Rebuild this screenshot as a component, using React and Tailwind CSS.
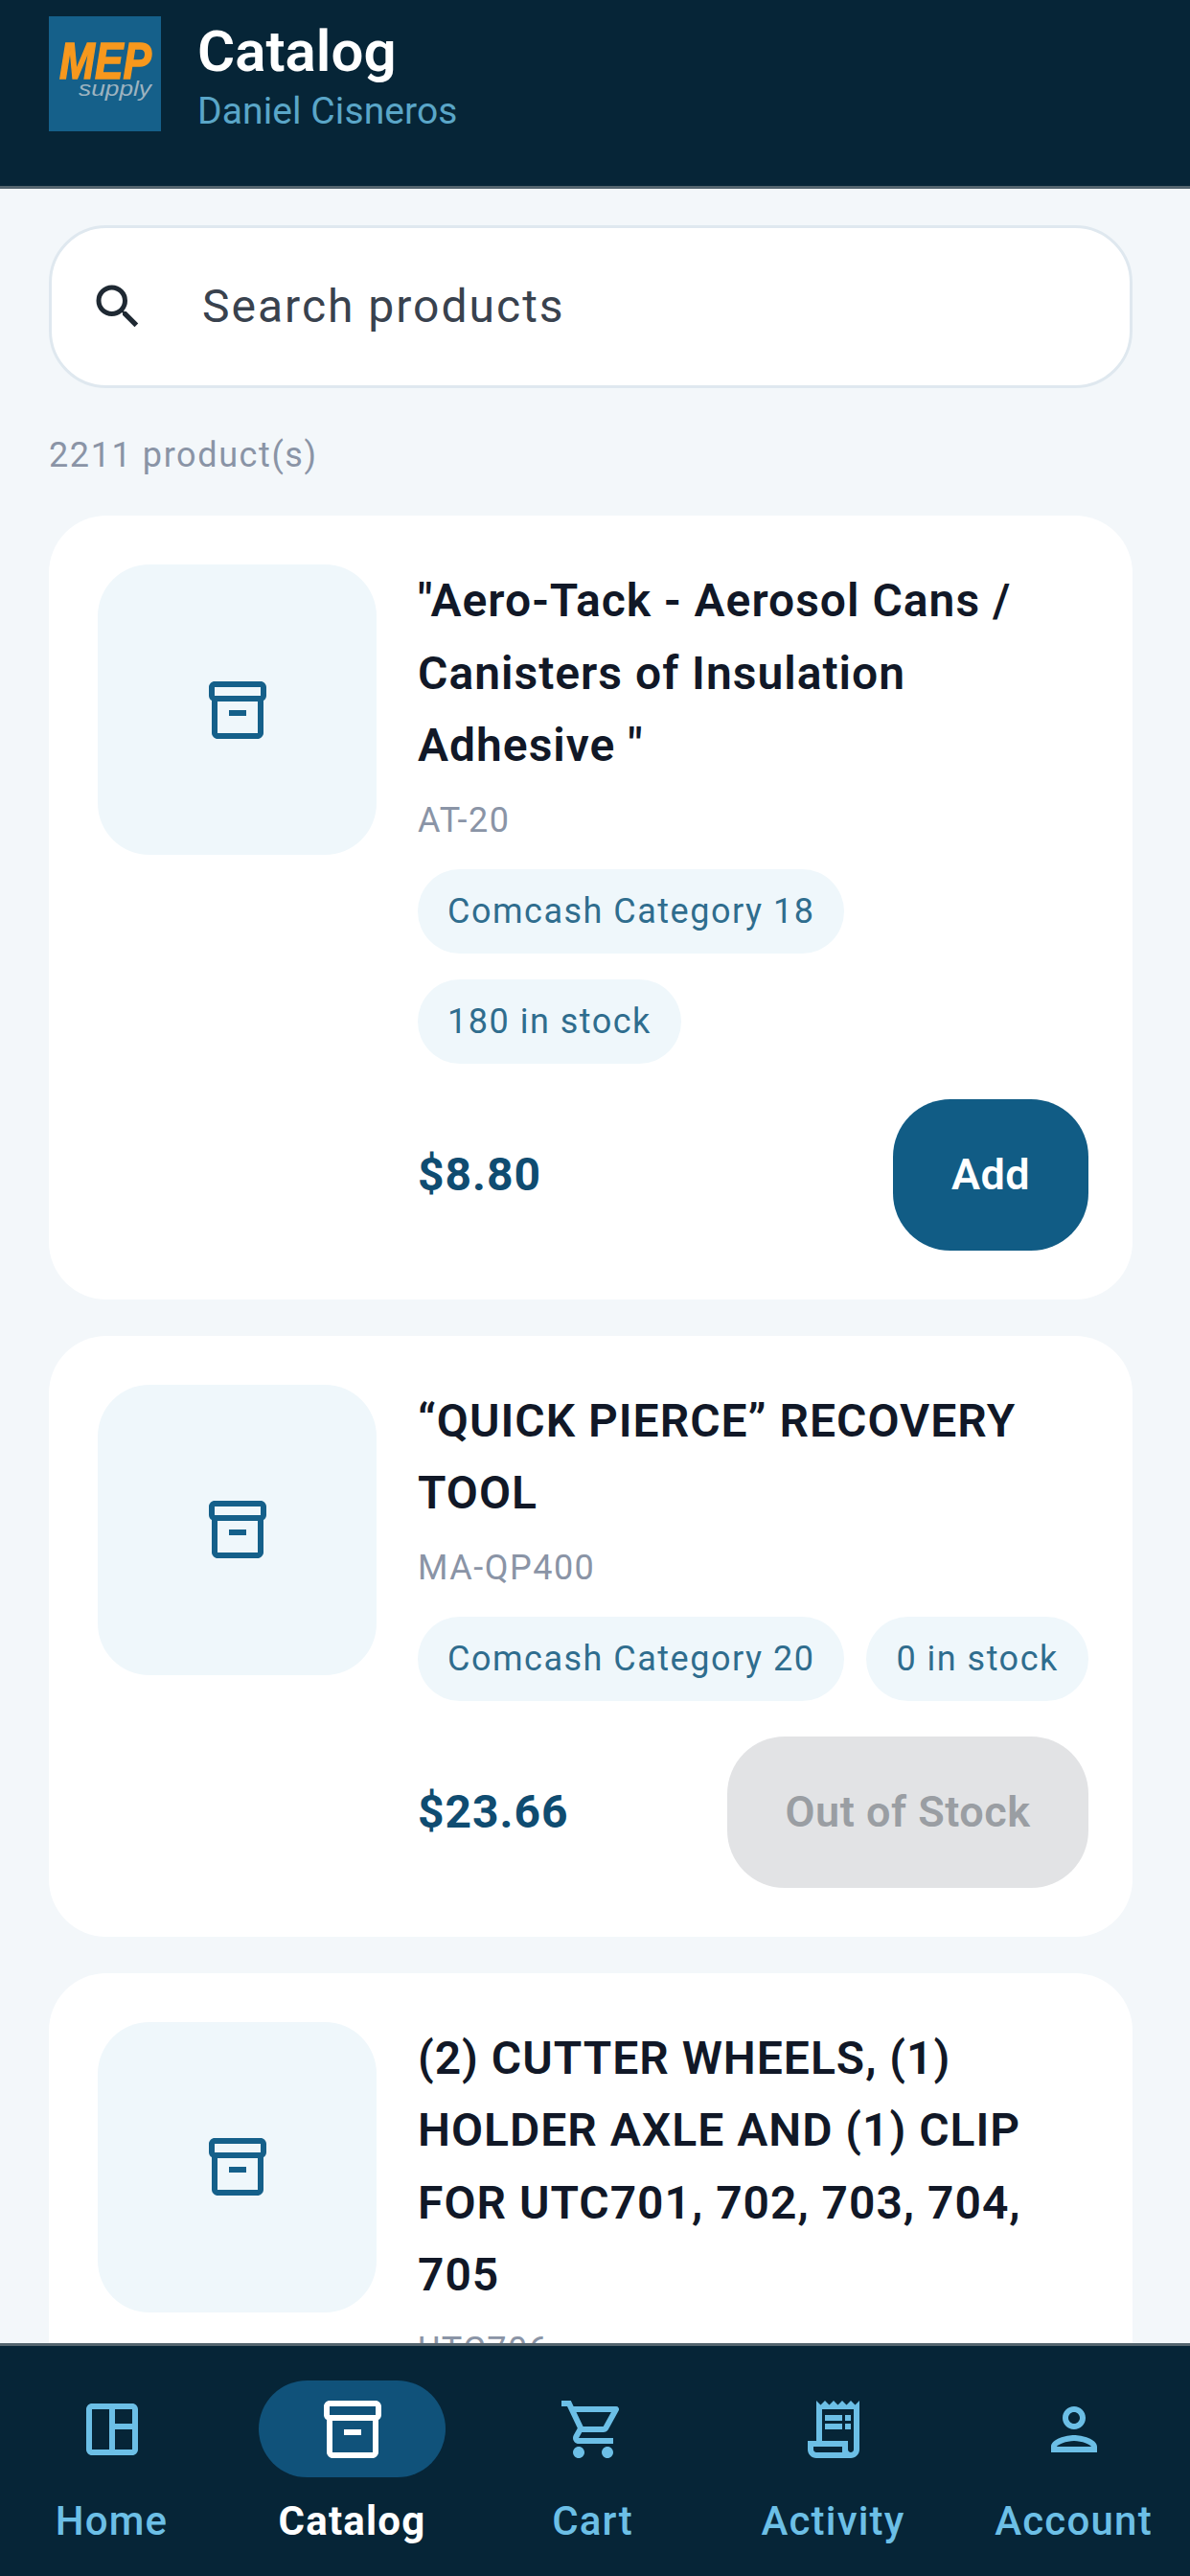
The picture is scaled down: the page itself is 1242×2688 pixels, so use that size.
import React from "react";
import {
  MdOutlineInventory2,
  MdOutlineSpaceDashboard,
  MdOutlineShoppingCart,
  MdOutlineReceiptLong,
  MdOutlinePerson,
  MdSearch,
} from "react-icons/md";

const products = [
  {
    name: '"Aero-Tack - Aerosol Cans / Canisters of Insulation Adhesive "',
    sku: "AT-20",
    category: "Comcash Category 18",
    stock: 180,
    price: "$8.80",
  },
  {
    name: "“QUICK PIERCE” RECOVERY TOOL",
    sku: "MA-QP400",
    category: "Comcash Category 20",
    stock: 0,
    price: "$23.66",
  },
  {
    name: "(2) CUTTER WHEELS, (1) HOLDER AXLE AND (1) CLIP FOR UTC701, 702, 703, 704, 705",
    sku: "UTC706",
    category: "Comcash Category 20",
    stock: 12,
    price: "$41.25",
  },
];

const tabs = [
  { label: "Home", icon: MdOutlineSpaceDashboard },
  { label: "Catalog", icon: MdOutlineInventory2, active: true },
  { label: "Cart", icon: MdOutlineShoppingCart },
  { label: "Activity", icon: MdOutlineReceiptLong },
  { label: "Account", icon: MdOutlinePerson },
];

function Logo() {
  return (
    <svg width="117" height="120" viewBox="0 0 117 120" className="shrink-0">
      <rect width="117" height="120" fill="#15608a" />
      <text
        x="11"
        y="65"
        textLength="96"
        lengthAdjust="spacingAndGlyphs"
        fontFamily="Liberation Sans"
        fontWeight="700"
        fontStyle="italic"
        fontSize="54"
        fill="#f7981d"
        stroke="#f7981d"
        strokeWidth="1.5"
      >
        MEP
      </text>
      <text
        x="31"
        y="83"
        textLength="76"
        lengthAdjust="spacingAndGlyphs"
        fontFamily="Liberation Sans"
        fontStyle="italic"
        fontSize="22"
        fill="#9db3c0"
      >
        supply
      </text>
    </svg>
  );
}

function Chip({ children }) {
  return (
    <span className="h-[88px] px-[31px] rounded-full bg-[#eff7fb] text-[#2f6d8e] text-[36px] tracking-[1.5px] flex items-center whitespace-nowrap">
      {children}
    </span>
  );
}

function ProductCard({ product }) {
  const inStock = product.stock > 0;
  return (
    <div className="bg-white rounded-[60px] pl-[51px] pr-[46px] py-[51px] flex gap-[43px] shrink-0">
      <div className="w-[291px] h-[303px] shrink-0 rounded-[54px] bg-[#eff7fb] flex items-center justify-center text-[#15608a]">
        <MdOutlineInventory2 size={72} />
      </div>
      <div className="flex-1 min-w-0">
        <h2 className="text-[48px] leading-[75.5px] tracking-[1px] font-semibold text-[#111827]">
          {product.name}
        </h2>
        <p className="text-[36px] leading-[54px] tracking-[1.5px] text-[#8a94a6] mt-[13px]">{product.sku}</p>
        <div className="flex flex-wrap gap-x-[23px] gap-y-[27px] mt-[24px]">
          <Chip>{product.category}</Chip>
          <Chip>{product.stock} in stock</Chip>
        </div>
        <div className="flex items-center justify-between mt-[37px]">
          <span className="text-[48px] font-bold text-[#0f4c71] tracking-[1px]">{product.price}</span>
          {inStock ? (
            <button className="w-[204px] h-[158px] rounded-[60px] bg-[#115c85] text-white text-[45px] tracking-[0.5px] font-semibold">
              Add
            </button>
          ) : (
            <button className="w-[377px] h-[158px] rounded-[60px] bg-[#e2e3e5] text-[#9a9ea3] text-[45px] tracking-[0.5px] font-semibold">
              Out of Stock
            </button>
          )}
        </div>
      </div>
    </div>
  );
}

export default function App() {
  return (
    <div className="h-[2688px] flex flex-col overflow-hidden bg-[#f3f7fa] font-['Roboto',sans-serif]">
      <header className="h-[197px] shrink-0 bg-[#062537] pl-[51px] pt-[17px] flex items-start gap-[38px] border-b-[3px] border-[#54656f]">
        <Logo />
        <div>
          <h1 className="text-[60px] leading-[72px] font-semibold text-white mt-[1px]">Catalog</h1>
          <p className="text-[39px] leading-[48px] text-[#5aa6c8] tracking-[0.1px] mt-[2px]">Daniel Cisneros</p>
        </div>
      </header>

      <main className="flex-1 min-h-0 overflow-hidden pl-[51px] pr-[60px] pt-[38px] flex flex-col">
        <div className="h-[170px] shrink-0 bg-white rounded-[60px] border-[3px] border-[#dfe8ef] flex items-center pl-[39px]">
          <MdSearch size={60} className="text-[#1f2933] shrink-0" />
          <span className="ml-[58px] text-[48px] tracking-[2px] text-[#39424e]">Search products</span>
        </div>
        <p className="text-[36px] leading-[54px] tracking-[1.6px] text-[#8a94a6] mt-[43px] mb-[36px]">2211 product(s)</p>
        <div className="flex flex-col gap-[38px]">
          {products.map((product) => (
            <ProductCard key={product.sku} product={product} />
          ))}
        </div>
      </main>

      <nav className="h-[243px] shrink-0 bg-[#062537] border-t-[3px] border-[#54656f] overflow-hidden">
        <div className="grid grid-cols-[repeat(5,251px)] -ml-[9px] pt-[36px]">
          {tabs.map((tab) => {
            const Icon = tab.icon;
            return (
              <div key={tab.label} className="flex flex-col items-center">
                <div
                  className={`w-[195px] h-[101px] rounded-full flex items-center justify-center ${
                    tab.active ? "bg-[#10527a] text-white" : "text-[#6cbfe6]"
                  }`}
                >
                  <Icon size={72} />
                </div>
                <span
                  className={`mt-[18px] text-[42px] leading-[56px] tracking-[1.2px] whitespace-nowrap ${
                    tab.active ? "text-white font-bold" : "text-[#6cbfe6] font-medium"
                  }`}
                >
                  {tab.label}
                </span>
              </div>
            );
          })}
        </div>
      </nav>
    </div>
  );
}
